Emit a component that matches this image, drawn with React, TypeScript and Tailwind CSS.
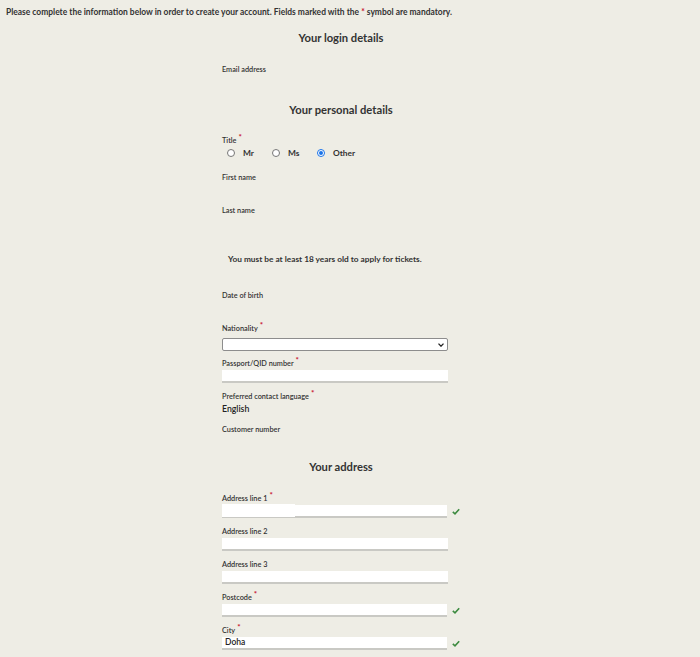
import React from "react";

const Req = () => (
  <span className="text-[#c8102e] ml-[2px] relative top-[-3px] text-[8px] leading-none font-bold">*</span>
);

const Check = () => (
  <svg width="8" height="7" viewBox="0 0 8 7" className="ml-[5px] shrink-0">
    <path d="M0.8 3.8 L3 5.8 L7.2 1.2" fill="none" stroke="#3d8b40" strokeWidth="1.6" />
  </svg>
);

const Label = ({ children, req }: { children: React.ReactNode; req?: boolean }) => (
  <div className="h-[10px] text-[7.3px] leading-[10px] font-semibold text-[#333] overflow-visible whitespace-nowrap">
    {children}
    {req && <Req />}
  </div>
);

const Input = ({ value, check, patch }: { value?: string; check?: boolean; patch?: boolean }) => (
  <div className="flex items-center mt-[1px] h-[13px]">
    <div className="relative w-[226px] h-[13px] bg-white border-b-2 border-[#c9c9c4] text-[8.5px] leading-[11px] font-semibold text-[#222] pl-[3px]">
      {value}
      {patch && <div className="absolute left-0 top-[-1px] w-[73px] h-[13px] bg-white" />}
    </div>
    {check && <Check />}
  </div>
);

const Heading = ({ children, cls }: { children: React.ReactNode; cls: string }) => (
  <div className={`h-[16px] text-[11.2px] leading-[16px] font-bold text-[#333] text-center ${cls}`}>{children}</div>
);

const Radio = ({ label, checked }: { label: string; checked?: boolean }) => (
  <div className="flex items-center w-[45px]">
    <span
      className={`w-[8px] h-[8px] rounded-full border ${checked ? "border-[#1a73e8]" : "border-[#777]"} bg-white flex items-center justify-center`}
    >
      {checked && <span className="w-[4px] h-[4px] rounded-full bg-[#1a73e8]" />}
    </span>
    <span className="ml-[8px] text-[8.4px] leading-[12px] font-bold text-[#333]">{label}</span>
  </div>
);

export default function App() {
  return (
    <div
      className="min-h-[657px] w-[700px] bg-[#eeede5] text-[#333] pt-[6px]"
      style={{ fontFamily: "Lato, 'Open Sans', sans-serif" }}
    >
      <div className="pl-[6px] h-[12px] text-[8.45px] leading-[12px] font-bold text-[#333]">
        Please complete the information below in order to create your account. Fields marked with the{" "}
        <span className="text-[#c8102e]">*</span> symbol are mandatory.
      </div>
      <div className="ml-[222px] w-[238px]">
        <Heading cls="mt-[12px]">Your login details</Heading>
        <div className="mt-[19px]"><Label>Email address</Label></div>

        <Heading cls="mt-[27px]">Your personal details</Heading>
        <div className="mt-[18px]"><Label req>Title</Label></div>
        <div className="mt-[1px] flex items-center pl-[5px] h-[12px]">
          <Radio label="Mr" />
          <Radio label="Ms" />
          <Radio label="Other" checked />
        </div>
        <div className="mt-[14px]"><Label>First name</Label></div>
        <div className="mt-[23px]"><Label>Last name</Label></div>

        <div className="mt-[37px] h-[12px] pl-[6px] text-[8.3px] leading-[12px] font-bold text-[#333]">
          You must be at least 18 years old to apply for tickets.
        </div>

        <div className="mt-[26px]"><Label>Date of birth</Label></div>
        <div className="mt-[23px]"><Label req>Nationality</Label></div>
        <div className="mt-[4px] w-[226px] h-[13px] bg-white border border-[#8d8d8d] rounded-[2px] flex items-center justify-end pr-[3px]">
          <svg width="6" height="4" viewBox="0 0 6 4">
            <path d="M0.5 0.6 L3 3.2 L5.5 0.6" fill="none" stroke="#222" strokeWidth="1.3" />
          </svg>
        </div>

        <div className="mt-[8px]"><Label req>Passport/QID number</Label></div>
        <Input />

        <div className="mt-[9px]"><Label req>Preferred contact language</Label></div>
        <div className="mt-[1px] h-[12px] text-[8.7px] leading-[12px] font-semibold text-[#222]">English</div>
        <div className="mt-[10px]"><Label>Customer number</Label></div>

        <Heading cls="mt-[24px]">Your address</Heading>
        <div className="mt-[19px]"><Label req>Address line 1</Label></div>
        <Input check patch />
        <div className="mt-[9px]"><Label>Address line 2</Label></div>
        <Input />
        <div className="mt-[9px]"><Label>Address line 3</Label></div>
        <Input />
        <div className="mt-[9px]"><Label req>Postcode</Label></div>
        <Input check />
        <div className="mt-[9px]"><Label req>City</Label></div>
        <Input value="Doha" check />
      </div>
    </div>
  );
}
